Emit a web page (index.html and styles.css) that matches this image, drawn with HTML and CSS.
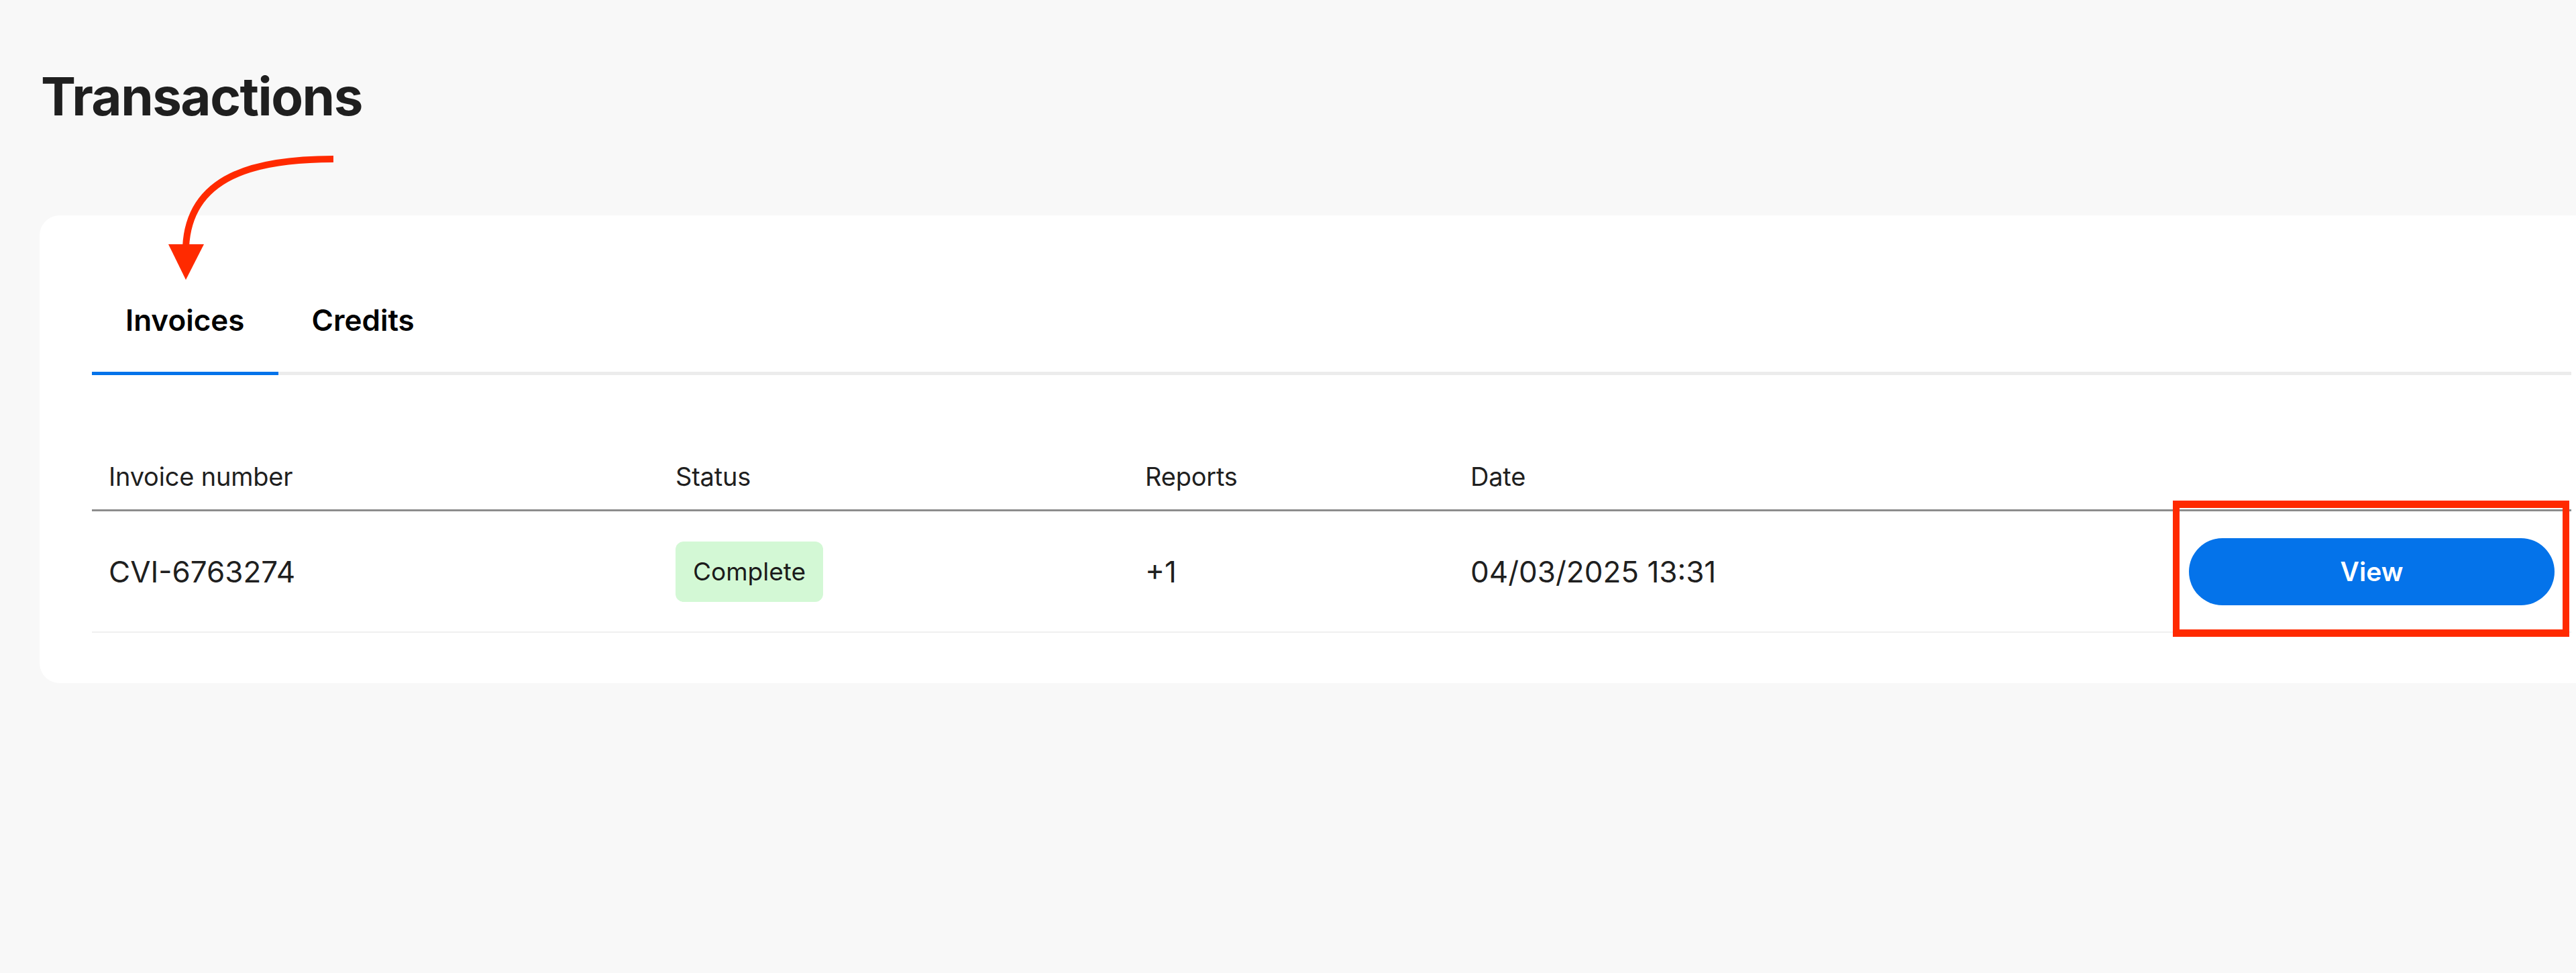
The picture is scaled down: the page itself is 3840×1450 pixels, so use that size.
FILE: index.html
```html
<!DOCTYPE html>
<html lang="en">
<head>
<meta charset="utf-8">
<title>Transactions</title>
<link rel="stylesheet" href="styles.css">
</head>
<body>
<main class="page">
  <h1 class="title">Transactions</h1>
  <section class="card">
    <nav class="tabs">
      <button class="tab active">Invoices</button>
      <button class="tab">Credits</button>
    </nav>
    <table class="tx">
      <colgroup>
        <col class="c1"><col class="c2"><col class="c3"><col class="c4"><col class="c5">
      </colgroup>
      <thead>
        <tr><th>Invoice number</th><th>Status</th><th>Reports</th><th>Date</th><th></th></tr>
      </thead>
      <tbody>
        <tr>
          <td class="big">CVI-6763274</td>
          <td><span class="badge">Complete</span></td>
          <td class="big">+1</td>
          <td class="big">04/03/2025 13:31</td>
          <td class="action"><button class="view">View</button><span class="highlight"></span></td>
        </tr>
      </tbody>
    </table>
  </section>
  <svg class="arrow" width="600" height="450" viewBox="0 0 600 450">
    <path d="M497 237 C 380 237, 282 262, 277 368" fill="none" stroke="#ff2a00" stroke-width="10"/>
    <polygon points="251,364 304,364 277,417" fill="#ff2a00"/>
  </svg>
</main>
</body>
</html>
```
FILE: styles.css
```css
html, body {
  margin: 0;
  padding: 0;
  overflow: hidden;
  background: #f8f8f8;
}
body {
  font-family: "Inter", "Liberation Sans", sans-serif;
  color: #1f1f1f;
  width: 3840px;
  height: 1450px;
}
.page {
  position: relative;
  padding-top: 97px;
}
.title {
  margin: 0 0 0 61px;
  font-size: 78px;
  line-height: 94px;
  font-weight: 700;
  letter-spacing: -1.5px;
  color: #1f1f1f;
}
.card {
  margin: 130px 0 0 59px;
  width: 3852px;
  box-sizing: border-box;
  background: #ffffff;
  border-radius: 30px;
  padding: 78px 78px 75px 78px;
}
.tabs {
  display: flex;
  border-bottom: 5px solid #ececec;
}
.tab {
  font-family: inherit;
  background: none;
  border: 0;
  border-bottom: 5px solid transparent;
  margin-bottom: -5px;
  height: 160px;
  padding: 0 50px;
  font-size: 44px;
  font-weight: 600;
  color: #000;
}
.tab.active {
  border-bottom-color: #0473ea;
}
.tx {
  margin-top: 102px;
  width: 100%;
  border-collapse: collapse;
  table-layout: fixed;
}
.c1 { width: 845px; }
.c2 { width: 700px; }
.c3 { width: 485px; }
.c4 { width: 1071px; }
.c5 { width: 595px; }
.tx th {
  text-align: left;
  font-weight: 400;
  font-size: 38px;
  letter-spacing: -0.2px;
  height: 98px;
  padding: 0 25px;
  color: #1f1f1f;
  border-bottom: 3px solid #8d8d8d;
}
.tx td {
  height: 179px;
  padding: 0 25px;
  font-size: 44px;
  color: #1f1f1f;
  border-bottom: 2px solid #efefef;
  vertical-align: middle;
}
.badge {
  display: inline-block;
  background: #d3f8d5;
  border-radius: 12px;
  padding: 0 26px;
  height: 90px;
  line-height: 90px;
  font-size: 37px;
  color: #1b1b1b;
}
.action {
  position: relative;
}
.view {
  display: block;
  width: 100%;
  height: 100px;
  border: 0;
  border-radius: 50px;
  background: #0473ea;
  color: #fff;
  font-family: inherit;
  font-size: 39px;
  font-weight: 600;
}
.highlight {
  position: absolute;
  left: 1px;
  right: 3px;
  top: -16px;
  bottom: -8px;
  border: 11px solid #ff2a00;
  border-left-width: 10px;
  border-right-width: 10px;
}
.arrow {
  position: absolute;
  left: 0;
  top: 0;
}
```
